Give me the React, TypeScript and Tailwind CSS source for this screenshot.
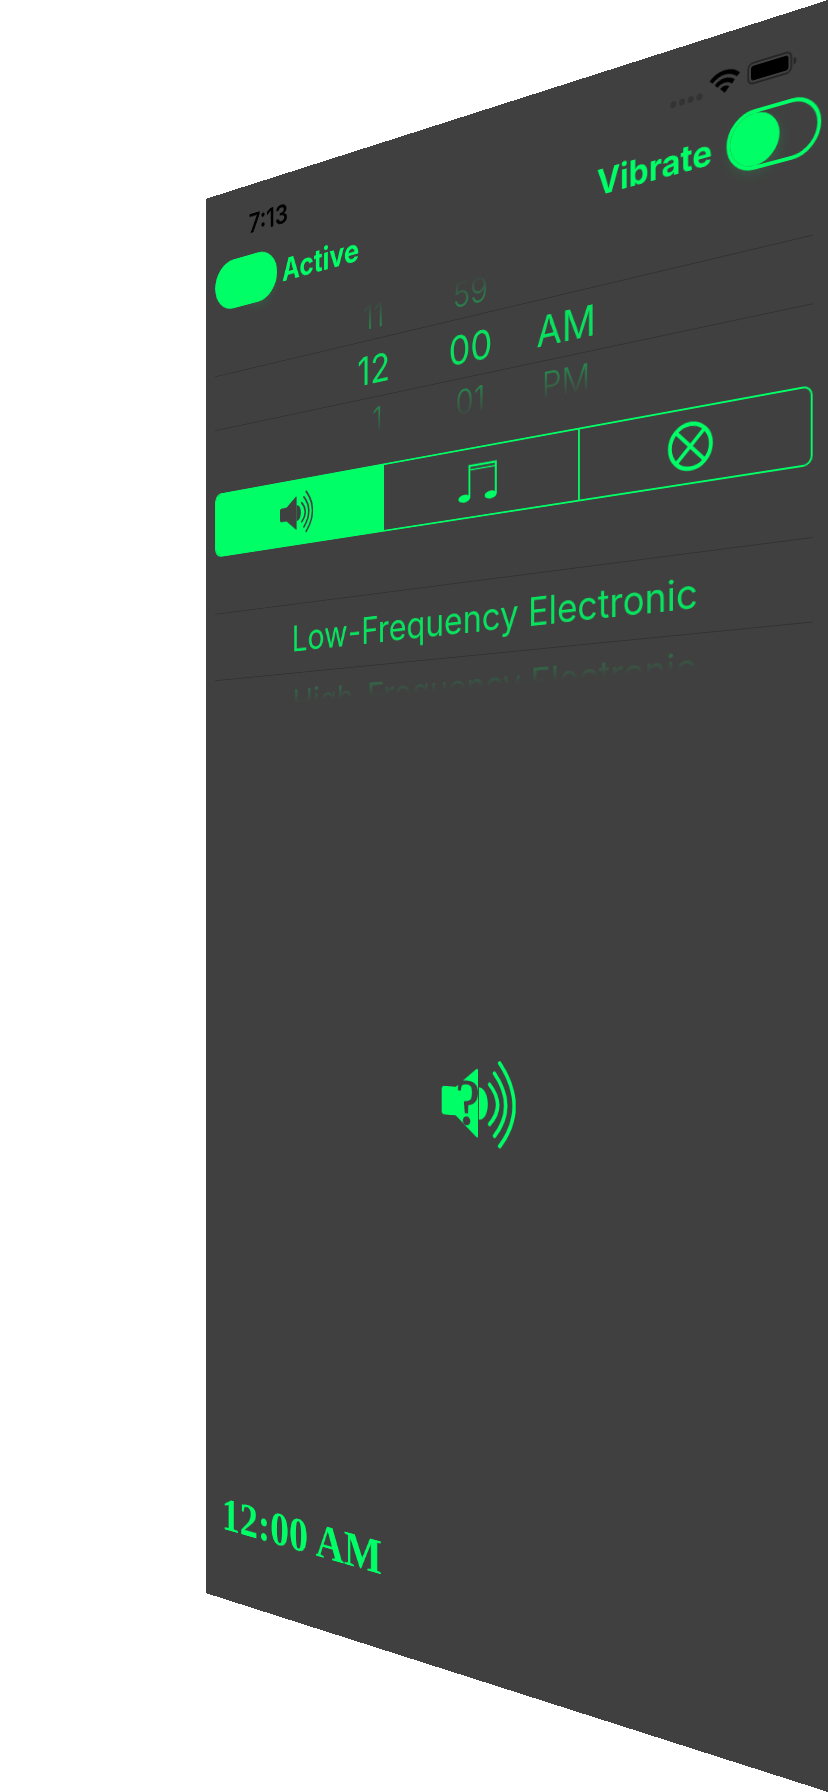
import { useState } from "react";
import type { ReactNode } from "react";

type SoundKind = "tone" | "music" | "none";

function WifiIcon() {
  return (
    <svg viewBox="0 0 34 24" className="h-6 w-[34px]" fill="none" stroke="#000" strokeWidth="4.6" aria-hidden="true">
      <path d="M1.6 9.2 A22 22 0 0 1 32.4 9.2" />
      <path d="M7.4 15 A13.8 13.8 0 0 1 26.6 15" />
      <path d="M17 24 L11.8 18.8 A7.4 7.4 0 0 1 22.2 18.8 Z" fill="#000" stroke="none" />
    </svg>
  );
}

function BatteryIcon() {
  return (
    <svg viewBox="0 0 53 23" className="h-[23px] w-[53px]" aria-hidden="true">
      <rect x="1" y="1" width="46.5" height="21" rx="5.5" fill="none" stroke="#262626" strokeWidth="2" />
      <rect x="4" y="4" width="40.5" height="15" rx="3" fill="#000" />
      <path d="M50 7.5 Q53 9 53 11.5 Q53 14 50 15.5 Z" fill="#262626" />
    </svg>
  );
}

function SpeakerIcon({ className, unknown = false }: { className: string; unknown?: boolean }) {
  return (
    <svg viewBox="0 0 100 100" className={className} aria-hidden="true">
      <path
        d="M4 34 H19.5 L47.5 12 Q50 10.5 50 13.5 V88 Q50 91.5 47.5 89.5 L19.5 67 H4 Q0 67 0 63 V38 Q0 34 4 34 Z"
        fill="currentColor"
      />
      <path d="M51 32.5 C58 32.5 63 40 63 51 C63 62 58 69.5 51 69.5 Z" fill="currentColor" />
      <g fill="none" stroke="currentColor" strokeWidth="4.6" strokeLinecap="round">
        <path d="M65.5 28.5 Q87 51 65.5 73.5" />
        <path d="M72 15.5 Q102 51 72 86.5" />
        <path d="M79 3.5 Q117 51 79 97.5" />
      </g>
      {unknown && (
        <text
          x="36"
          y="76"
          textAnchor="middle"
          fontSize="73"
          strokeWidth="1.6"
          className="fill-[#404040] stroke-[#404040] font-['Liberation_Serif',serif]"
        >
          ?
        </text>
      )}
    </svg>
  );
}

function MusicIcon() {
  return (
    <svg viewBox="0 0 52 44" className="h-11 w-[52px]" fill="none" stroke="currentColor" strokeWidth="2.4" aria-hidden="true">
      <path d="M15.2 39 V2 H50.8 V38" />
      <path d="M15.2 6.5 H50.8" strokeWidth="1.6" />
      <ellipse cx="8.2" cy="38.5" rx="8" ry="4.4" transform="rotate(-2 8.2 38.5)" fill="currentColor" stroke="none" />
      <ellipse cx="43.8" cy="38.5" rx="8" ry="4.4" transform="rotate(-2 43.8 38.5)" fill="currentColor" stroke="none" />
    </svg>
  );
}

function NoneIcon() {
  return (
    <svg viewBox="0 0 52 52" className="size-[52px]" fill="none" stroke="currentColor" strokeWidth="4.5" aria-hidden="true">
      <circle cx="26" cy="26" r="23.5" />
      <path d="M9.5 9.5 L42.5 42.5 M42.5 9.5 L9.5 42.5" strokeWidth="4" />
    </svg>
  );
}

function Switch({ id, checked, onChange }: { id: string; checked: boolean; onChange: (on: boolean) => void }) {
  return (
    <input
      id={id}
      type="checkbox"
      role="switch"
      checked={checked}
      onChange={(event) => onChange(event.target.checked)}
      className="h-[62px] w-[102px] shrink-0 appearance-none rounded-full border-4 border-[#00ff66] before:block before:size-[54px] before:rounded-full before:bg-[#00ff66] before:shadow-[0_6px_16px_rgba(0,255,102,0.16)] checked:bg-[#00ff66] checked:before:translate-x-10"
    />
  );
}

function Wheel({ label, band, children }: { label: string; band: string; children: ReactNode }) {
  return (
    <section aria-label={label} className="relative flex flex-col justify-center">
      <div className={`pointer-events-none absolute inset-x-4 top-1/2 -translate-y-1/2 border-y border-[#323232] ${band}`} />
      <div className="flex h-40 justify-center overflow-hidden leading-none [mask-image:linear-gradient(to_bottom,transparent,#000_44px,#000_116px,transparent)]">
        {children}
      </div>
    </section>
  );
}

function Column({ label, rows, className }: { label: string; rows: string[]; className: string }) {
  return (
    <ul role="listbox" aria-label={label} className={`flex flex-col justify-center text-center ${className}`}>
      {rows.map((row, index) => (
        <li
          key={index}
          role="option"
          aria-selected={index === 1}
          className={
            index === 1
              ? "flex h-[62px] shrink-0 items-center justify-center text-[47px] opacity-85"
              : "flex h-[62px] shrink-0 items-center justify-center text-[40px] font-light opacity-50"
          }
        >
          {row}
        </li>
      ))}
    </ul>
  );
}

const segments: { kind: SoundKind; label: string; icon: ReactNode }[] = [
  { kind: "tone", label: "Tone", icon: <SpeakerIcon className="size-[52px]" /> },
  { kind: "music", label: "Music", icon: <MusicIcon /> },
  { kind: "none", label: "None", icon: <NoneIcon /> },
];

export default function App() {
  const [active, setActive] = useState(true);
  const [vibrate, setVibrate] = useState(false);
  const [kind, setKind] = useState<SoundKind>("tone");

  return (
    <div className="min-h-screen overflow-hidden bg-white font-['Inter','Liberation_Sans',sans-serif] perspective-[199vw]">
      <div className="flex min-h-screen w-full origin-right -rotate-y-[34.6deg] flex-col bg-[#404040] text-[#00ff66]">
        <header className="flex h-[88px] items-center justify-between pt-3 pr-[33px] pl-[72px] text-black">
          <time className="text-[33px] font-semibold">7:13</time>
          <div className="flex items-end gap-2">
            <div className="flex gap-[3px]">
              <span className="size-[7px] rounded-full bg-[#333333]" />
              <span className="size-[7px] rounded-full bg-[#333333]" />
              <span className="size-[7px] rounded-full bg-[#333333]" />
              <span className="size-[7px] rounded-full bg-[#333333]" />
            </div>
            <WifiIcon />
            <BatteryIcon />
          </div>
        </header>

        <div className="flex justify-between pr-[7px] pl-4 text-[38px] font-bold">
          <div className="flex items-center gap-2">
            <Switch id="active" checked={active} onChange={setActive} />
            <label htmlFor="active">Active</label>
          </div>
          <div className="flex items-center gap-4">
            <label htmlFor="vibrate">Vibrate</label>
            <Switch id="vibrate" checked={vibrate} onChange={setVibrate} />
          </div>
        </div>

        <div className="grid h-[232px]">
          <Wheel label="Alarm time" band="h-[70px]">
            <div className="flex justify-center pr-[45px]">
              <Column label="Hour" rows={["11", "12", "\u00a01"]} className="w-[137px]" />
              <Column label="Minute" rows={["59", "00", "01"]} className="w-[137px]" />
              <Column label="Period" rows={["", "AM", "PM"]} className="w-[113px]" />
            </div>
          </Wheel>
        </div>

        <div role="group" aria-label="Sound type" className="mx-4 grid h-[81px] grid-cols-3 divide-x-2 divide-[#00ff66] overflow-hidden rounded-[10px] border-2 border-[#00ff66]">
          {segments.map((segment) => (
            <button
              key={segment.kind}
              type="button"
              aria-label={segment.label}
              aria-pressed={kind === segment.kind}
              onClick={() => setKind(segment.kind)}
              className="flex items-center justify-center aria-pressed:bg-[#00ff66] aria-pressed:text-[#404040]"
            >
              {segment.icon}
            </button>
          ))}
        </div>

        <div className="grid h-[230px]">
          <Wheel label="Sound" band="h-[86px]">
            <ul role="listbox" aria-label="Tone" className="pt-[41px] text-center whitespace-nowrap">
              <li role="option" aria-selected="true" className="flex h-[78px] items-center justify-center text-[44px] opacity-85">
                Low-Frequency Electronic
              </li>
              <li role="option" aria-selected="false" className="flex h-[78px] items-center justify-center text-[43px] opacity-50">
                High-Frequency Electronic
              </li>
            </ul>
          </Wheel>
        </div>

        <main className="flex flex-1 items-center justify-center">
          <button type="button" aria-label="Preview sound">
            <SpeakerIcon className="size-[100px]" unknown />
          </button>
        </main>

        <footer className="pt-[83px] pb-[79px] pl-[27px]">
          <p className="font-['Liberation_Serif',serif] text-[60px] leading-[60px] font-bold">12:00 AM</p>
        </footer>
      </div>
    </div>
  );
}
